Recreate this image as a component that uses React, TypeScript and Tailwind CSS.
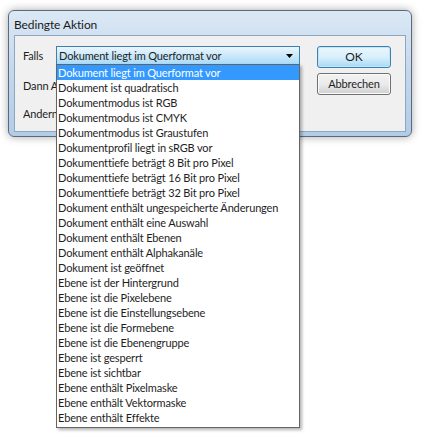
import React from "react";

const items = [
  "Dokument liegt im Querformat vor",
  "Dokument ist quadratisch",
  "Dokumentmodus ist RGB",
  "Dokumentmodus ist CMYK",
  "Dokumentmodus ist Graustufen",
  "Dokumentprofil liegt in sRGB vor",
  "Dokumenttiefe beträgt 8 Bit pro Pixel",
  "Dokumenttiefe beträgt 16 Bit pro Pixel",
  "Dokumenttiefe beträgt 32 Bit pro Pixel",
  "Dokument enthält ungespeicherte Änderungen",
  "Dokument enthält eine Auswahl",
  "Dokument enthält Ebenen",
  "Dokument enthält Alphakanäle",
  "Dokument ist geöffnet",
  "Ebene ist der Hintergrund",
  "Ebene ist die Pixelebene",
  "Ebene ist die Einstellungsebene",
  "Ebene ist die Formebene",
  "Ebene ist die Ebenengruppe",
  "Ebene ist gesperrt",
  "Ebene ist sichtbar",
  "Ebene enthält Pixelmaske",
  "Ebene enthält Vektormaske",
  "Ebene enthält Effekte",
];

export default function App() {
  return (
    <div
      className="relative w-[422px] h-[437px] bg-white overflow-hidden text-[11px] tracking-[-0.15px] text-[#1e1e1e]"
      style={{ fontFamily: "Lato, 'Noto Sans', sans-serif" }}
    >
      {/* Window */}
      <div className="absolute left-[8px] top-[10px] w-[404px] h-[127px] rounded-[6px] border border-[#5a6a7a] bg-gradient-to-b from-[#dbe8f5] via-[#c3d7ed] to-[#b2cce8] shadow-[0_0_8px_rgba(0,0,0,0.35)] flex flex-col">
        <div className="h-[24px] flex items-center pl-[5px] pt-[3px] text-[12px] tracking-[-0.1px] text-[#1a1a1a]">
          Bedingte Aktion
        </div>
        <div className="mx-[5px] mb-[4px] flex-1 border border-[#8fa6bf] bg-[#f0f0f0] flex">
          <div className="w-[301px] flex flex-col pt-[10px] pl-[8px]">
            <div className="flex items-center h-[20px]">
              <span className="w-[33px] overflow-hidden whitespace-nowrap">Falls</span>
              <div className="w-[244px] h-[20px] border border-[#3c7fb1] bg-gradient-to-b from-[#eaf6fd] to-[#a7d9f5] flex items-center pl-[2px] pr-[6px]">
                <span className="flex-1">Dokument liegt im Querformat vor</span>
                <svg width="7" height="4" viewBox="0 0 7 4">
                  <path d="M0 0H7L3.5 4Z" fill="#000" />
                </svg>
              </div>
            </div>
            <div className="flex items-center h-[20px] mt-[10px]">
              <span className="w-[33px] overflow-hidden whitespace-nowrap">Dann Aktion ausführen</span>
            </div>
            <div className="flex items-center h-[20px] mt-[8px]">
              <span className="w-[33px] overflow-hidden whitespace-nowrap">Andernfalls</span>
            </div>
          </div>
          <div className="flex flex-col pt-[10px] pl-[1px] gap-[5px]">
            <div className="w-[74px] h-[22px] rounded-[3px] border border-[#3c7fb1] bg-gradient-to-b from-[#eaf6fd] via-[#d9f0fc] to-[#a7d9f5] flex items-center justify-center shadow-[inset_0_0_0_1px_#c4e5f6] text-[12px]">
              OK
            </div>
            <div className="w-[74px] h-[22px] rounded-[3px] border border-[#707070] bg-gradient-to-b from-[#f2f2f2] via-[#ebebeb] to-[#cfcfcf] flex items-center justify-center shadow-[inset_0_0_0_1px_#fcfcfc]">
              Abbrechen
            </div>
          </div>
        </div>
      </div>

      {/* Dropdown list */}
      <div className="absolute left-[56px] top-[64px] w-[244px] h-[364px] bg-white border border-[#646464] shadow-[2px_2px_3px_rgba(0,0,0,0.3)]">
        {items.map((t, i) => (
          <div
            key={t}
            className={
              i === 0
                ? "h-[15px] leading-[15px] pl-[1px] bg-[#3399ff] text-white whitespace-nowrap"
                : "h-[15px] leading-[15px] pl-[1px] whitespace-nowrap"
            }
          >
            {t}
          </div>
        ))}
      </div>
    </div>
  );
}
